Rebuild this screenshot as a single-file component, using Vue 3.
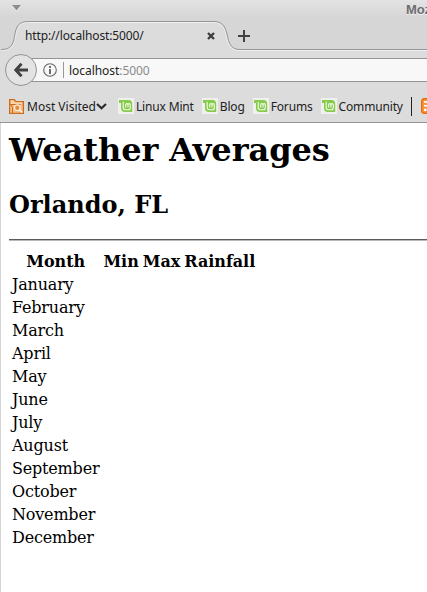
<script setup>
const links = ['Linux Mint', 'Blog', 'Forums', 'Community']
const months = ['January', 'February', 'March', 'April', 'May', 'June', 'July', 'August', 'September', 'October', 'November', 'December']
const columns = ['Month', 'Min', 'Max', 'Rainfall']
</script>

<template>
  <div class="window">
    <header class="chrome">
      <div class="titlebar">
        <svg class="menu" width="10" height="7" viewBox="0 0 10 7"><path d="M0 1h9L4.5 6.500z" fill="#f5f5f5" /><path d="M0 0h9L4.500 5.500z" fill="#8c8c8c" /></svg>
        <span class="title">Mozilla Firefox</span>
      </div>
      <div class="tabs">
        <svg class="tab-shape" width="427" height="31" viewBox="0 0 427 31">
          <path d="M1 28.500C10 28.500 13 25 14.500 15.500C16 5 19 .5 28 .5H214C222 .5 225 5 227 13C229 23 231 28.500 240 28.500H427V31H1Z" fill="#dcdcdc" />
          <path d="M1 29.500C11 29.500 14 25 15.500 15.500C17 6 20 1.500 28 1.500H214C221 1.500 224 6 226 13C228 24 230 29.500 240 29.500H427" fill="none" stroke="#eee" />
          <path d="M1 28.500C10 28.500 13 25 14.500 15.500C16 5 19 .5 28 .5H214C222 .5 225 5 227 13C229 23 231 28.500 240 28.500H427" fill="none" stroke="#92979b" />
        </svg>
        <div class="tab-row">
          <span class="tab-title">http://localhost:5000/</span>
          <svg class="close" width="8" height="8" viewBox="0 0 8 8"><path d="M1 1l6 6M7 1L1 7" stroke="#3c3c3c" stroke-width="2.300" /></svg>
          <svg class="plus" width="12" height="12" viewBox="0 0 12 12"><path d="M6 0v12M0 6h12" stroke="#424242" stroke-width="2" /></svg>
        </div>
      </div>
      <div class="nav">
        <button class="back" aria-label="Back">
          <svg width="14" height="14" viewBox="0 0 14 14"><path d="M7.500 .8L1.800 7l5.700 6.200M2.500 7H14" fill="none" stroke="#424242" stroke-width="3" /></svg>
        </button>
        <div class="url">
          <svg class="info" width="14" height="14" viewBox="0 0 14 14"><circle cx="7" cy="7" r="6.300" fill="none" stroke="#666" stroke-width="1.100" /><path d="M7 3v2M7 6v5" stroke="#555" stroke-width="1.700" /></svg>
          <span class="divider"></span>
          <span class="address">localhost<span class="port">:5000</span></span>
        </div>
      </div>
      <div class="bookmarks">
        <svg class="folder" width="15" height="15" viewBox="0 0 15 15">
          <path d="M.6 14.400V.6H5.500L6.500 2.600H14.400V14.400Z" fill="#f5bd84" stroke="#cc6a1e" stroke-width="1.200" />
          <path d="M1 5.500h10.500M3.500 14V8.500L2 6" fill="none" stroke="#cf6d20" />
          <path d="M2 2.200h3M2 4h11" stroke="#ffe8cc" />
          <circle cx="8.300" cy="8.700" r="2.800" fill="#e68b3c" stroke="#fff3e4" stroke-width="1.200" /><path d="M10.300 10.800l3 2.700" stroke="#fff3e4" stroke-width="1.500" />
        </svg>
        <span class="label visited">Most Visited</span>
        <svg class="chevron" width="11" height="7" viewBox="0 0 11 7"><path d="M1 1L5.500 5.300L10 1" fill="none" stroke="#2c2c2c" stroke-width="2.200" /></svg>
        <div class="links">
          <a v-for="link in links" :key="link" class="link">
            <svg width="16" height="16" viewBox="0 0 16 16">
              <rect width="16" height="16" fill="#f0f0ee" />
              <path d="M1 2H10.500Q14.200 2 14.200 6V14H7Q3 14 3 10V5H1Z" fill="#86cc4a" />
              <path d="M5.200 3.800V9.500Q5.200 11.700 7.500 11.700H10.300Q12.300 11.700 12.300 9.700V6.800Q12.300 5.600 11.100 5.600Q10 5.600 10 6.800V9.500M10 6.800Q10 5.600 8.900 5.600Q7.700 5.600 7.700 6.800V9.500" fill="none" stroke="#f4faee" stroke-width="1.100" />
            </svg>
            <span class="label link-label">{{ link }}</span>
          </a>
        </div>
        <span class="separator"></span>
        <svg class="feed" width="16" height="16" viewBox="0 0 16 16"><rect x=".6" y=".6" width="14.800" height="14.800" rx="2.500" fill="#f8933a" stroke="#de6a0a" stroke-width="1.200" /><circle cx="4.300" cy="11.800" r="1.400" fill="#fff" /><path d="M3 7.500Q8.500 7.500 8.500 13M3 3.800Q12.200 3.800 12.200 13" fill="none" stroke="#fff" stroke-width="1.700" /></svg>
      </div>
    </header>
    <main class="page">
      <h1>Weather Averages</h1>
      <h2>Orlando, FL</h2>
      <hr />
      <table>
        <thead><tr><th v-for="column in columns" :key="column">{{ column }}</th></tr></thead>
        <tbody><tr v-for="month in months" :key="month"><td>{{ month }}</td></tr></tbody>
      </table>
    </main>
  </div>
</template>

<style>
body { margin: 0; overflow: hidden; }
</style>

<style scoped>
.window { width: 427px; height: 592px; overflow: hidden; background: #fff; }
.chrome { box-sizing: border-box; height: 123px; border-bottom: 1px solid #949494; background: #dcdcdc; font: 12px/16px "Noto Sans", sans-serif; color: #222; white-space: nowrap; overflow: hidden; }
svg { display: block; flex: none; }
.titlebar { height: 21px; display: flex; align-items: flex-start; background: linear-gradient(#e3e3e3, #d6d6d6 17px); }
.menu { margin: 5px 0 0 12px; }
.title { margin: 2px 0 0 384px; font: bold 13px/15px "Liberation Sans", sans-serif; color: #6c6c70; text-shadow: 0 1px #f2f2f2; }
.tabs { display: grid; height: 31px; background: #d6d6d6; }
.tab-shape, .tab-row { grid-area: 1 / 1; }
.tab-row { display: flex; align-items: center; height: 30px; padding-left: 25px; }
.tab-title { width: 182px; letter-spacing: -0.13px; }
.plus { margin-left: 23px; }
.nav { display: flex; align-items: center; height: 36px; padding-left: 5px; }
.back { box-sizing: border-box; width: 32px; height: 32px; flex: none; padding: 0; display: flex; align-items: center; justify-content: center; border: 1px solid #949494; border-radius: 50%; background: #e3e3e3; z-index: 1; }
.url { box-sizing: border-box; height: 24px; flex: 1; margin-left: -8px; padding-left: 14px; display: flex; align-items: center; border: solid #949494; border-width: 1px 0; background: #f8f8f8; }
.divider { width: 1px; height: 16px; margin: 0 5px 0 6px; background: #999; }
.address { padding-top: 1px; color: #222; letter-spacing: -0.05px; }
.port { color: #8b8b8b; }
.bookmarks { display: flex; align-items: center; height: 34px; padding-left: 9px; padding-top: 2px; box-sizing: border-box; }
.label { padding-top: 1px; }
.visited { margin-left: 3px; width: 70px; }
.links { display: flex; margin-left: 11px; width: 285px; flex: none; }
.link { display: flex; align-items: center; gap: 2px; margin-right: 8px; }
.link-label { letter-spacing: -0.16px; }
.separator { width: 1px; height: 19px; flex: none; margin: 0 9px 0 8px; background: #222; }
.page { box-sizing: border-box; height: 469px; padding: 8px 0 0 8px; border-left: 1px solid #d5d5d5; font: 16px/19px "DejaVu Serif", serif; color: #000; }
h1 { margin: 0; font-size: 32px; line-height: 38px; letter-spacing: -0.06px; }
h2 { margin: 21px 0 20px; font-size: 24px; line-height: 29px; }
hr { height: 1px; margin: 0; border: 0; background: #5b5b5b; border-bottom: 1px solid #b8b8b8; }
table { margin-top: 8px; border-spacing: 2px; }
th, td { padding: 1px; }
th { letter-spacing: -0.03px; }
td { letter-spacing: -0.19px; }
</style>
